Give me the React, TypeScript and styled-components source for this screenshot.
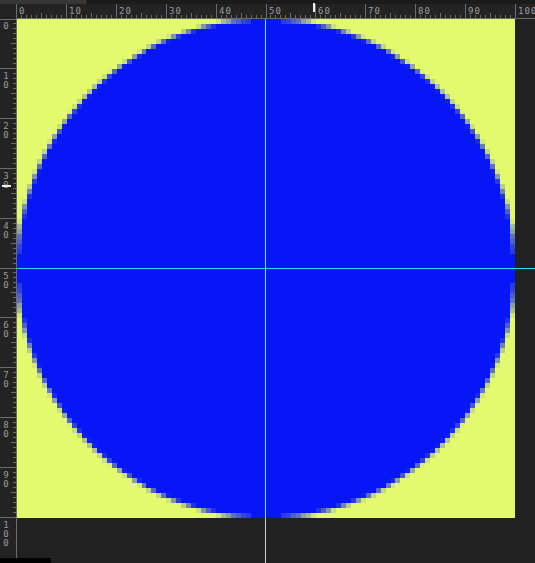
import { useMemo } from "react";
import styled, { createGlobalStyle } from "styled-components";

const YELLOW = [227, 250, 110];
const BLUE = [6, 22, 247];
const GRID = 100;
const UNIT = 4.99;

const GlobalStyle = createGlobalStyle`
  html, body {
    margin: 0;
    padding: 0;
    background: #212121;
    overflow: hidden;
  }
`;

const Window = styled.div`
  position: relative;
  width: 535px;
  height: 563px;
  background: #212121;
  display: flex;
  flex-direction: column;
  overflow: hidden;
  font-family: "DejaVu Sans Mono", monospace;
`;

const TabStrip = styled.div`
  height: 4px;
  background: #1b1b1b;
  display: flex;
`;

const Tab = styled.div`
  width: 85px;
  background: #363636;
  border-right: 1px solid #454545;
`;

const TopRuler = styled.div`
  position: relative;
  height: 15px;
  background: #232323;

  svg {
    display: block;
  }
`;

const RulerText = styled.text`
  font-family: "DejaVu Sans Mono", monospace;
  font-size: 9px;
  letter-spacing: 1px;
  fill: #9c9c9c;
`;

const TopCursor = styled.div`
  position: absolute;
  left: 313px;
  top: -1px;
  width: 2px;
  height: 9px;
  background: #f0f0f0;
`;

const Body = styled.div`
  flex: 1;
  display: flex;
`;

const LeftRuler = styled.div`
  position: relative;
  width: 17px;
  flex: none;
  background: #232323;

  svg {
    display: block;
  }
`;

const LeftCursor = styled.div`
  position: absolute;
  left: 2px;
  top: 166px;
  width: 9px;
  height: 2px;
  background: #f0f0f0;
`;

const Stage = styled.div`
  position: relative;
  flex: 1;
  background: #212121;
`;

const Canvas = styled.div`
  width: 498px;
  height: 499px;

  svg {
    display: block;
  }
`;

const HLine = styled.div`
  position: absolute;
  left: 0;
  right: 0;
  top: 249px;
  height: 1px;
  background: #1ee4f2;
`;

const VLine = styled.div<{ $outside?: boolean }>`
  position: absolute;
  left: 248px;
  width: 1px;
  top: ${(p) => (p.$outside ? "499px" : "0")};
  ${(p) => (p.$outside ? "bottom: 0;" : "height: 499px;")}
  background: ${(p) => (p.$outside ? "#cfcfcf" : "#5ff0f8")};
`;

const StatusChip = styled.div`
  position: absolute;
  left: 0;
  bottom: 0;
  width: 51px;
  height: 5px;
  background: #000;
`;

const mix = (t: number) => {
  const c = YELLOW.map((y, i) => Math.round(y + (BLUE[i] - y) * t));
  return `rgb(${c[0]},${c[1]},${c[2]})`;
};

// coverage of the disc for each pixel, merged into runs per row
const buildRuns = () => {
  const cx = 50;
  const cy = 50;
  const r = 50;
  const n = 5;
  const runs: { x: number; y: number; w: number; fill: string }[] = [];
  for (let y = 0; y < GRID; y++) {
    let cur: { x: number; y: number; w: number; fill: string } | null = null;
    for (let x = 0; x < GRID; x++) {
      let hit = 0;
      for (let sy = 0; sy < n; sy++) {
        for (let sx = 0; sx < n; sx++) {
          const px = x + (sx + 0.5) / n - cx;
          const py = y + (sy + 0.5) / n - cy;
          if (px * px + py * py <= r * r) hit++;
        }
      }
      const t = hit / (n * n);
      if (t === 0) {
        cur = null;
        continue;
      }
      const fill = mix(t);
      if (cur && cur.fill === fill) {
        cur.w++;
      } else {
        cur = { x, y, w: 1, fill };
        runs.push(cur);
      }
    }
  }
  return runs;
};

const marks = Array.from({ length: GRID + 1 }, (_, i) => i);
const tickLen = (i: number, major: number) =>
  i % 10 === 0 ? major : i % 5 === 0 ? 5 : 3;

const HorizontalScale = () => (
  <svg width="535" height="15" shapeRendering="crispEdges">
    <line x1="16" y1="14.5" x2="535" y2="14.5" stroke="#6c6c6c" />
    {marks.map((i) => {
      const x = Math.round(16 + i * UNIT) + 0.5;
      return (
        <line
          key={i}
          x1={x}
          y1={14 - tickLen(i, 15)}
          x2={x}
          y2={14}
          stroke="#6c6c6c"
        />
      );
    })}
    {marks
      .filter((i) => i % 10 === 0)
      .map((i) => (
        <RulerText key={i} x={Math.round(16 + i * UNIT) + 3} y="9.5">
          {i}
        </RulerText>
      ))}
  </svg>
);

const VerticalScale = () => (
  <svg width="17" height="544" shapeRendering="crispEdges">
    <line x1="16.5" y1="0" x2="16.5" y2="544" stroke="#6c6c6c" />
    {marks.map((i) => {
      const y = Math.max(0.5, Math.round(i * UNIT) - 0.5);
      return (
        <line
          key={i}
          x1={16 - tickLen(i, 16)}
          y1={y}
          x2={16}
          y2={y}
          stroke="#6c6c6c"
        />
      );
    })}
    {marks
      .filter((i) => i % 10 === 0)
      .map((i) =>
        String(i)
          .split("")
          .map((d, k) => (
            <RulerText
              key={`${i}-${k}`}
              x="6.5"
              y={Math.round(i * UNIT) + 10 + k * 9}
              textAnchor="middle"
            >
              {d}
            </RulerText>
          ))
      )}
  </svg>
);

const App = () => {
  const runs = useMemo(buildRuns, []);

  return (
    <>
      <GlobalStyle />
      <Window>
        <TabStrip>
          <Tab />
        </TabStrip>

        <TopRuler>
          <HorizontalScale />
          <TopCursor />
        </TopRuler>

        <Body>
          <LeftRuler>
            <VerticalScale />
            <LeftCursor />
          </LeftRuler>

          <Stage>
            <Canvas>
              <svg
                width="498"
                height="499"
                viewBox={`0 0 ${GRID} ${GRID}`}
                preserveAspectRatio="none"
                shapeRendering="crispEdges"
              >
                <rect width={GRID} height={GRID} fill={mix(0)} />
                {runs.map((r, i) => (
                  <rect
                    key={i}
                    x={r.x}
                    y={r.y}
                    width={r.w}
                    height={1}
                    fill={r.fill}
                  />
                ))}
              </svg>
            </Canvas>
            <HLine />
            <VLine />
            <VLine $outside />
          </Stage>
        </Body>

        <StatusChip />
      </Window>
    </>
  );
};

export default App;
